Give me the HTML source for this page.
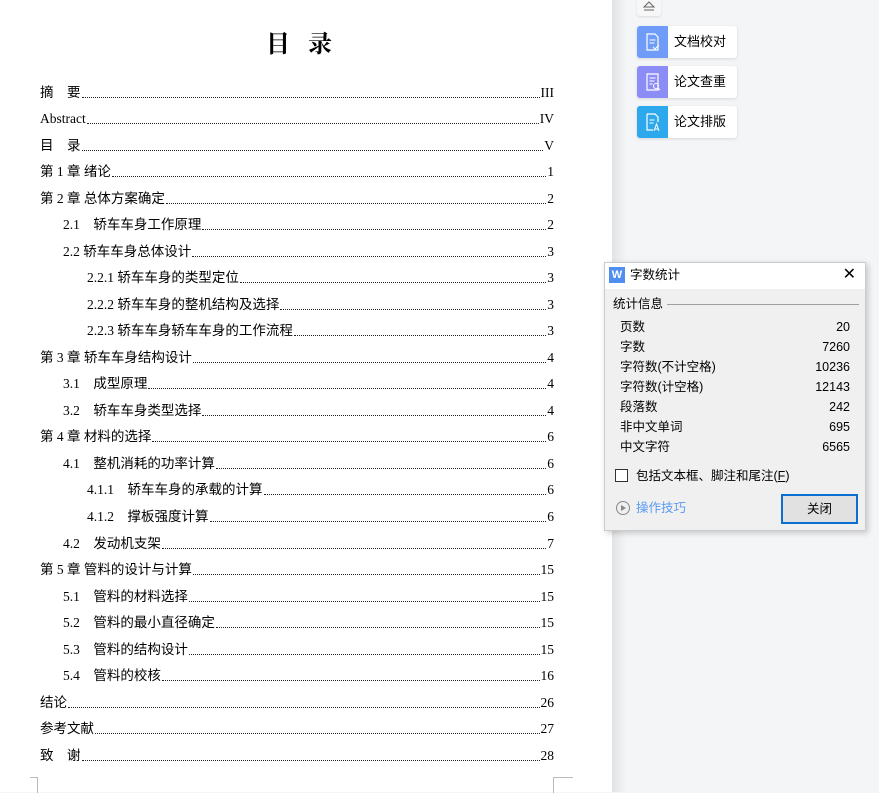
<!DOCTYPE html>
<html><head><meta charset="utf-8">
<style>
*{margin:0;padding:0;box-sizing:border-box}
body{width:879px;height:792px;overflow:hidden;background:#f4f5f7;position:relative;font-family:"Liberation Serif","Noto Sans CJK SC",serif}
.page{position:absolute;left:0;top:0;width:612px;height:792px;background:#fff}
.shadow{position:absolute;left:612px;top:0;width:14px;height:792px;background:linear-gradient(to right,#e2e3e5,#f4f5f7)}
h1{position:absolute;left:10px;width:596px;top:24px;text-align:center;font-size:24px;font-weight:bold;letter-spacing:18px;font-family:"Noto Serif CJK SC",serif}
.row{position:absolute;left:40px;width:514px;height:20px;display:flex;align-items:flex-end;font-size:13.5px;color:#000;line-height:20px}
.row .t{white-space:pre}
.row .d{flex:1;border-bottom:1px dotted #222;margin:0 1px 5px}
.l1{left:63px;width:491px}
.l2{left:87px;width:467px}
.cm{position:absolute;border-color:#bbb;border-style:solid;width:8px;height:16px}
.side{position:absolute;left:637px;width:100px;height:32px;background:#fff;border-radius:3px;box-shadow:0 1px 3px rgba(0,0,0,.12);font-family:"Liberation Sans","Noto Sans CJK SC",sans-serif;font-size:13px}
.side .ic{position:absolute;left:0;top:0;width:31px;height:32px;border-radius:3px 0 0 3px}
.side span{position:absolute;left:37px;top:7px;line-height:18px}
.dlg{position:absolute;left:604px;top:262px;width:262px;height:269px;background:#f0f0f0;border:1px solid #ccc;box-shadow:2px 2px 6px rgba(0,0,0,.2);font-family:"Liberation Sans","Noto Sans CJK SC",sans-serif;font-size:12.5px;color:#000;line-height:18px}
.tb{height:26px;background:#fff;position:relative}
.st{position:absolute;left:15px;width:230px;height:18px}
.st b{font-weight:normal;position:absolute;right:0;top:0}
</style></head><body>
<div class="page">
<h1>目录</h1>
<div class="row" style="top:83px"><span class="t">摘　要</span><span class="d"></span><span class="n">III</span></div>
<div class="row" style="top:109px"><span class="t">Abstract</span><span class="d"></span><span class="n">IV</span></div>
<div class="row" style="top:136px"><span class="t">目　录</span><span class="d"></span><span class="n">V</span></div>
<div class="row" style="top:162px"><span class="t">第 1 章 绪论</span><span class="d"></span><span class="n">1</span></div>
<div class="row" style="top:189px"><span class="t">第 2 章 总体方案确定</span><span class="d"></span><span class="n">2</span></div>
<div class="row l1" style="top:215px"><span class="t">2.1　轿车车身工作原理</span><span class="d"></span><span class="n">2</span></div>
<div class="row l1" style="top:242px"><span class="t">2.2 轿车车身总体设计</span><span class="d"></span><span class="n">3</span></div>
<div class="row l2" style="top:268px"><span class="t">2.2.1 轿车车身的类型定位</span><span class="d"></span><span class="n">3</span></div>
<div class="row l2" style="top:295px"><span class="t">2.2.2 轿车车身的整机结构及选择</span><span class="d"></span><span class="n">3</span></div>
<div class="row l2" style="top:321px"><span class="t">2.2.3 轿车车身轿车车身的工作流程</span><span class="d"></span><span class="n">3</span></div>
<div class="row" style="top:348px"><span class="t">第 3 章 轿车车身结构设计</span><span class="d"></span><span class="n">4</span></div>
<div class="row l1" style="top:374px"><span class="t">3.1　成型原理</span><span class="d"></span><span class="n">4</span></div>
<div class="row l1" style="top:401px"><span class="t">3.2　轿车车身类型选择</span><span class="d"></span><span class="n">4</span></div>
<div class="row" style="top:427px"><span class="t">第 4 章 材料的选择</span><span class="d"></span><span class="n">6</span></div>
<div class="row l1" style="top:454px"><span class="t">4.1　整机消耗的功率计算</span><span class="d"></span><span class="n">6</span></div>
<div class="row l2" style="top:480px"><span class="t">4.1.1　轿车车身的承载的计算</span><span class="d"></span><span class="n">6</span></div>
<div class="row l2" style="top:507px"><span class="t">4.1.2　撑板强度计算</span><span class="d"></span><span class="n">6</span></div>
<div class="row l1" style="top:534px"><span class="t">4.2　发动机支架</span><span class="d"></span><span class="n">7</span></div>
<div class="row" style="top:560px"><span class="t">第 5 章 管料的设计与计算</span><span class="d"></span><span class="n">15</span></div>
<div class="row l1" style="top:587px"><span class="t">5.1　管料的材料选择</span><span class="d"></span><span class="n">15</span></div>
<div class="row l1" style="top:613px"><span class="t">5.2　管料的最小直径确定</span><span class="d"></span><span class="n">15</span></div>
<div class="row l1" style="top:640px"><span class="t">5.3　管料的结构设计</span><span class="d"></span><span class="n">15</span></div>
<div class="row l1" style="top:666px"><span class="t">5.4　管料的校核</span><span class="d"></span><span class="n">16</span></div>
<div class="row" style="top:693px"><span class="t">结论</span><span class="d"></span><span class="n">26</span></div>
<div class="row" style="top:719px"><span class="t">参考文献</span><span class="d"></span><span class="n">27</span></div>
<div class="row" style="top:746px"><span class="t">致　谢</span><span class="d"></span><span class="n">28</span></div>
<div class="cm" style="left:30px;top:777px;border-width:1px 1px 0 0"></div>
<div class="cm" style="left:553px;top:777px;border-width:1px 0 0 1px;width:20px"></div>
</div>
<div class="shadow"></div>
<div style="position:absolute;left:637px;top:0;width:24px;height:16px;background:#f7f7f7;border-radius:0 0 3px 3px;box-shadow:0 1px 2px rgba(0,0,0,.1)">
<svg width="24" height="16" viewBox="0 0 24 16"><path d="M7 7 L12 2 L17 7 Z" fill="none" stroke="#666"/><path d="M7 10 H17" stroke="#666"/></svg></div>
<div class="side" style="top:26px"><div class="ic" style="background:#6e9cf8"><svg width="31" height="32"><path d="M10 8h8l3 3v13h-11z" fill="none" stroke="#fff" stroke-width="1.2"/><path d="M12.5 14h6M12.5 17h5" stroke="#fff"/><path d="M16 21l2 2 4-4" fill="none" stroke="#fff"/></svg></div><span>文档校对</span></div>
<div class="side" style="top:66px"><div class="ic" style="background:#8b8cf6"><svg width="31" height="32"><path d="M10 8h11v16h-11z" fill="none" stroke="#fff" stroke-width="1.2"/><path d="M12.5 12h6M12.5 15h5M12.5 18h3" stroke="#fff"/><circle cx="19" cy="20" r="2.5" fill="none" stroke="#fff"/><path d="M21 22l2 2" stroke="#fff"/></svg></div><span>论文查重</span></div>
<div class="side" style="top:106px"><div class="ic" style="background:#2ea8ec"><svg width="31" height="32"><path d="M10 8h8l3 3v5M10 8v16h6" fill="none" stroke="#fff" stroke-width="1.2"/><path d="M12.5 14h5M12.5 17h4" stroke="#fff"/><path d="M17 25l2.5-7 2.5 7M18 23h3" fill="none" stroke="#fff"/></svg></div><span>论文排版</span></div>
<div class="dlg">
<div class="tb"><div style="position:absolute;left:4px;top:4px;width:16px;height:16px;background:#4f8ef0;color:#fff;font-size:11px;text-align:center;line-height:16px;font-weight:bold">W</div><span style="position:absolute;left:25px;top:3px">字数统计</span><span style="position:absolute;right:9px;top:3px;font-size:16px;line-height:18px">✕</span></div>
<div style="position:absolute;left:8px;top:32px">统计信息</div>
<div style="position:absolute;left:62px;top:41px;width:192px;border-top:1px solid #a0a0a0"></div>
<div class="st" style="top:55px">页数<b>20</b></div>
<div class="st" style="top:75px">字数<b>7260</b></div>
<div class="st" style="top:95px">字符数(不计空格)<b>10236</b></div>
<div class="st" style="top:115px">字符数(计空格)<b>12143</b></div>
<div class="st" style="top:135px">段落数<b>242</b></div>
<div class="st" style="top:155px">非中文单词<b>695</b></div>
<div class="st" style="top:175px">中文字符<b>6565</b></div>
<div style="position:absolute;left:10px;top:206px;width:13px;height:13px;border:1px solid #333;background:#fff"></div>
<div style="position:absolute;left:31px;top:204px">包括文本框、脚注和尾注(<u>F</u>)</div>
<div style="position:absolute;left:11px;top:238px;width:14px;height:14px;border:1px solid #888;border-radius:50%"></div>
<div style="position:absolute;left:16px;top:242px;width:0;height:0;border-left:5px solid #888;border-top:3px solid transparent;border-bottom:3px solid transparent"></div>
<div style="position:absolute;left:31px;top:236px;color:#5b9bf0">操作技巧</div>
<div style="position:absolute;left:176px;top:231px;width:77px;height:30px;border:2px solid #0a6fd0;background:#e1e1e1;text-align:center;line-height:26px">关闭</div>
</div>
</body></html>
